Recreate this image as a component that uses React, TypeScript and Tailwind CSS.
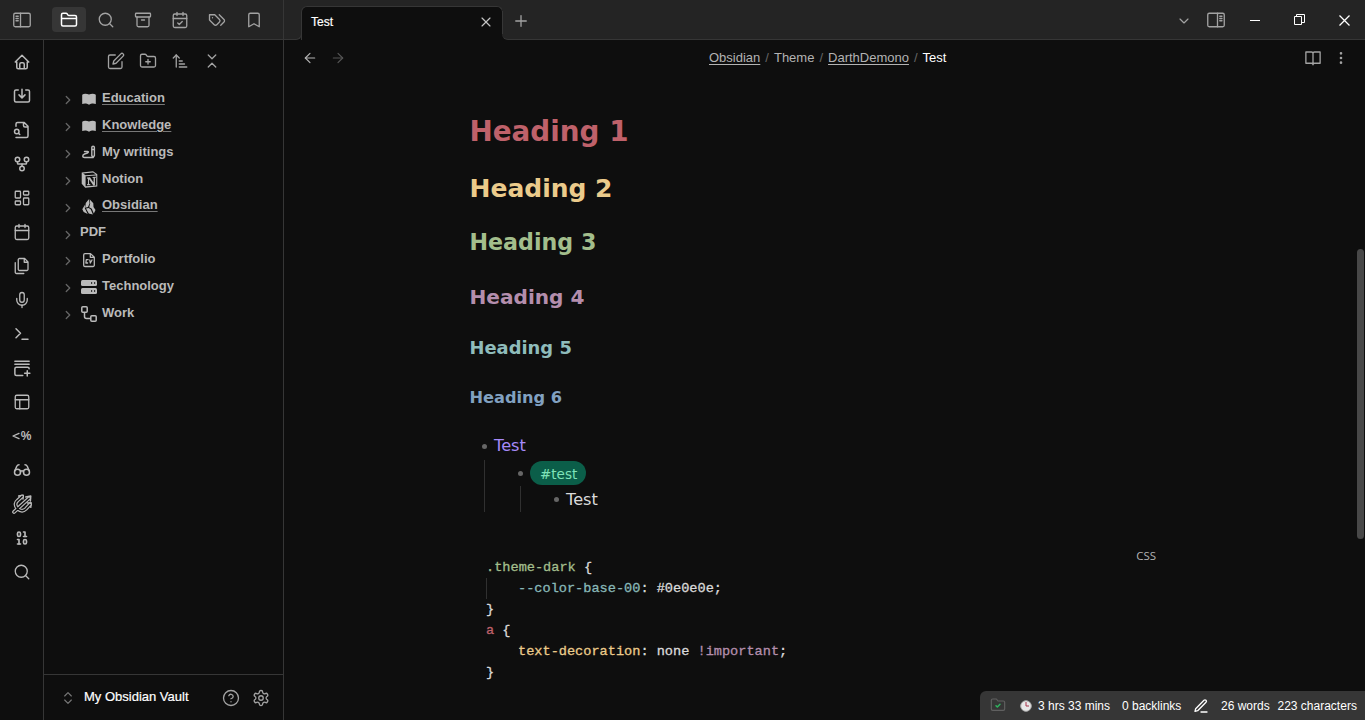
import React from "react";
import {
  Archive, ArrowLeft, ArrowRight, ArrowUpNarrowWide, Binary, Bookmark, Calendar,
  CalendarCheck, ChevronDown, ChevronRight, ChevronsUpDown, CircleQuestionMark,
  EllipsisVertical, FolderPlus, GitFork, Glasses, LayoutDashboard, Mic, PanelsTopLeft, Plus,
  Search, X,
} from "lucide-react";

type SvgProps = { children: React.ReactNode; size?: number; className?: string; sw?: number };

function Svg({ children, size = 18, className = "", sw = 1.75 }: SvgProps) {
  return (
    <svg width={size} height={size} viewBox="0 0 24 24" fill="none" stroke="currentColor" strokeWidth={sw} strokeLinecap="round" strokeLinejoin="round" className={"shrink-0 " + className}>
      {children}
    </svg>
  );
}

const L = { size: 18, strokeWidth: 1.75 };

const FolderLine = () => (
  <Svg sw={2}>
    <path d="M4 20h16a2 2 0 0 0 2-2V8a2 2 0 0 0-2-2h-7.9a2 2 0 0 1-1.7-.9L9.6 3.9A2 2 0 0 0 7.9 3H4a2 2 0 0 0-2 2v13a2 2 0 0 0 2 2ZM2 10h20" />
  </Svg>
);

const SidebarIcon = ({ right = false }: { right?: boolean }) => (
  <Svg className={right ? "-scale-x-100" : ""}>
    <rect x="1" y="3" width="22" height="18" rx="2" />
    <path d="M10 3v18M4 7h3M4 10h3M4 13h3" />
  </Svg>
);

const tridentPath = "M2.500 21.500 20.500 5M6.500 17.500C3 13.500 4 10 6.500 8L12 3M6.500 17.500c4 3.500 7.500 3 10 .5L21.500 12.500";
const tridentTips = "M16.500 3.500 22.500 2.500 22 8.500M8 2.500 13.500 1.500 13.200 6M18.500 10.800 23 10.500 22.500 16";

const ribbon: React.ReactNode[] = [
  <Svg sw={2}><path d="M5 12H3l9-9 9 9h-2M5 12v7a2 2 0 0 0 2 2h10a2 2 0 0 0 2-2v-7M9 21v-6a2 2 0 0 1 2-2h2a2 2 0 0 1 2 2v6" /></Svg>,
  <Svg sw={2}><path d="M7 4H4a2 2 0 0 0-2 2v12a2 2 0 0 0 2 2h16a2 2 0 0 0 2-2V6a2 2 0 0 0-2-2h-3M12 3v11M8 10.500l4 4 4-4" /></Svg>,
  <Svg sw={2}><path d="M4 22h14a2 2 0 0 0 2-2V7l-5-5H6a2 2 0 0 0-2 2v3M14 2v4a2 2 0 0 0 2 2h4M9 18l-1.500-1.500" /><circle cx="5" cy="14" r="3" /></Svg>,
  <GitFork size={18} strokeWidth={2} />,
  <LayoutDashboard {...L} />,
  <Calendar {...L} />,
  <Svg><path d="M15.500 2H8.600c-.4 0-.8.2-1.100.5-.3.3-.5.7-.5 1.100v12.800c0 .4.2.8.5 1.100.3.3.7.5 1.100.5h9.800c.4 0 .8-.2 1.100-.5.3-.3.5-.7.5-1.100V6.500L15.500 2zM3 7.600v12.800c0 .4.2.8.5 1.100.3.3.7.5 1.100.5h9.800M15 2v5h5" /></Svg>,
  <Mic {...L} />,
  <Svg sw={2}><path d="m4 17 6-6-6-6M12 19h8" /></Svg>,
  <Svg sw={2}><path d="M2.500 3h19M2.500 7h19M21.500 13a2 2 0 0 0-2-2h-15a2 2 0 0 0-2 2v7a2 2 0 0 0 2 2H13M19 15.500v7M15.500 19h7" /></Svg>,
  <PanelsTopLeft {...L} />,
  <span className="flex items-center font-['Liberation_Sans'] text-[12px] font-bold leading-none"><Svg size={8} sw={4}><path d="M21 4 3 12l18 8" /></Svg><span className="ml-[1px]">%</span></span>,
  <Glasses size={18} strokeWidth={2} />,
  <Svg size={20}>
    <path d={tridentPath} strokeWidth="4.600" />
    <path d={tridentTips} strokeWidth="1.800" />
    <path d={tridentPath} stroke="#0e0e0e" strokeWidth="1.700" />
  </Svg>,
  <Binary size={18} strokeWidth={2.200} />,
  <Search {...L} />,
];

const BookSolid = () => (
  <svg width="16" height="16" viewBox="0 0 16 16" fill="currentColor"><path d="M1.200 3.700C2.700 2.600 5.500 2.500 8 3.600c2.500-1.100 5.300-1 6.800.1v9.400c-1.700-.8-4.700-.8-6.100.3H7.300c-1.400-1.100-4.400-1.100-6.100-.3Z" /></svg>
);

const tree: { label: string; link?: boolean; icon?: React.ReactNode }[] = [
  { label: "Education", link: true, icon: <BookSolid /> },
  { label: "Knowledge", link: true, icon: <BookSolid /> },
  { label: "My writings", icon: (
    <svg width="16" height="16" viewBox="0 0 16 16" fill="none" stroke="currentColor" strokeWidth="1.400" strokeLinejoin="round" strokeLinecap="round"><path d="M10.800 3V2.500a1.300 1.300 0 0 1 2.600 0V10.500L12.100 12.500l-1.300-2ZM10.800 4.500h2.600M3.500 6.500h3.300c1 0 .7 1.200-.3 1.500L3.500 9C1 10 1.300 12.500 3.500 12.500h8.500" /></svg>) },
  { label: "Notion", icon: (
    <svg width="17" height="17" viewBox="0 0 24 24" fill="currentColor" className="-mt-px -mr-px"><path fillRule="evenodd" d="M1 2 17 .5 23 4.500V22L6 23.500 1 18ZM3 3.500 6.500 6 21 5l-4-2.800ZM6.500 7.500v14l15-1v-14ZM8.500 9l4.200-.3 5 7.500V10l-1.500-.3V8.300l5-.3v1.300l-1.500.5v10.400l-2.300.2-6-8.700v6.700l1.800.4v1.200L8.500 20v-1.300l1.300-.5v-7.400l-1.300-.3Z" /></svg>) },
  { label: "Obsidian", link: true, icon: (
    <svg width="16" height="16" viewBox="0 0 16 16" fill="currentColor"><path d="M4.800 4.100 7.800.2 8.600 4.300 7 8 4.200 8.800ZM8.600.3l3.700 3.900.2 3.700 2 3-1.700 3.500-2-4.700-2.600-1.500L9.200 4.500ZM3.900 5.700v3.900l2.800 5.400-4-1.900L1.300 10.200ZM5 9.500l2.700-.5 2.100 1.500 2.100 4.900-4.100-.8Z" /></svg>) },
  { label: "PDF" },
  { label: "Portfolio", icon: (
    <svg width="16" height="16" viewBox="0 0 16 16" fill="none" stroke="currentColor" strokeWidth="1.300" strokeLinejoin="round"><path d="M9.500 1.600H4a1.300 1.300 0 0 0-1.300 1.300v10.300A1.300 1.300 0 0 0 4 14.500h8a1.300 1.300 0 0 0 1.300-1.300V5.200ZM9.300 1.800v3.500h3.800M7.600 7.700H5.300L4.900 11h2.200M8.700 7.500 9.300 11l2-3.500" /></svg>) },
  { label: "Technology", icon: (
    <svg width="16" height="16" viewBox="0 0 16 16"><rect y="1" width="16" height="6" rx="1.500" fill="currentColor" /><rect y="9" width="16" height="6" rx="1.500" fill="currentColor" /><path d="M10 4h1.200M13 4h1.200M10 12h1.200M13 12h1.200" stroke="#0e0e0e" strokeWidth="1.300" /></svg>) },
  { label: "Work", icon: (
    <svg width="16" height="16" viewBox="0 0 16 16" fill="none" stroke="currentColor" strokeWidth="1.500"><rect x=".8" y=".8" width="5.400" height="5.400" rx="1" /><rect x="9.800" y="9.800" width="5.400" height="5.400" rx="1" /><path d="M3.500 6.500v4a2 2 0 0 0 2 2h4" /></svg>) },
];

function TopBar() {
  return (
    <header className="flex h-10 shrink-0 bg-[#242424] text-[#a3a3a3]">
      <div className="flex w-[284px] items-center border-r border-b border-[#363636] pl-[13px]">
        <SidebarIcon />
        <div className="ml-[21px] flex h-[25px] w-[34px] items-center justify-center rounded bg-[#363636] text-white"><FolderLine /></div>
        <div className="ml-[11px] flex gap-[19px]">
          <Search {...L} /><Archive {...L} /><CalendarCheck {...L} />
          <Svg><path d="M9 5H2v7l6.290 6.290c.94.94 2.480.94 3.420 0l3.580-3.580c.94-.94.94-2.480 0-3.420L9 5ZM6 9.010V9M15 5l6.300 6.300a2.400 2.400 0 0 1 0 3.400L17 19" /></Svg>
          <Bookmark {...L} />
        </div>
      </div>
      <div className="flex w-[18px] flex-col">
        <div className="grow" />
        <div className="flex h-4 bg-[#0e0e0e]"><div className="grow rounded-br-md border-r border-b border-[#363636] bg-[#242424]" /></div>
      </div>
      <div className="mt-1.5 -ml-px flex w-[202px] items-center rounded-t-md border-x border-t border-[#363636] bg-[#0e0e0e] pr-2 pl-[9px] text-white">
        <span className="grow pb-[3px] text-[12px] [-webkit-text-stroke:0.2px_currentColor]">Test</span>
        <X size={16} strokeWidth={1.75} className="mb-[4px] text-[#c4c4c4]" />
      </div>
      <div className="relative -ml-px flex grow">
        <div className="absolute bottom-0 left-0 size-1.5 bg-[#0e0e0e]" />
        <div className="relative flex grow items-center rounded-bl-md border-b border-[#363636] bg-[#242424] pl-[10px]">
          <div className="absolute top-[11px] left-0 h-[23px] w-px bg-[#363636]" />
          <Plus {...L} className="mt-[2px]" />
          <div className="grow" />
          <ChevronDown size={16} strokeWidth={1.75} className="mt-[2px]" />
          <div className="mr-[25px] ml-[15px]"><SidebarIcon right /></div>
          <svg className="mt-[2px] mr-[33px]" width="11" height="11" stroke="white"><path d="M0 5.500h10" /></svg>
          <svg className="mr-[34px]" width="11" height="11" fill="none" stroke="white"><path d="M.5 2.500h7v8h-7zM2.500 2.500v-2h8v8h-3" /></svg>
          <svg className="mt-[1px] mr-[15px]" width="11" height="11" stroke="white" strokeWidth="1.300"><path d="m.5.5 10 10m0-10-10 10" /></svg>
        </div>
      </div>
    </header>
  );
}

function Sidebar() {
  return (
    <aside className="flex w-60 shrink-0 flex-col border-r border-[#363636]">
      <div className="flex h-[43px] items-center gap-[14px] pb-[2px] pl-[63px] text-[#a3a3a3]">
        <Svg><path d="M11 4H4a2 2 0 0 0-2 2v14a2 2 0 0 0 2 2h14a2 2 0 0 0 2-2v-7M18.500 2.500a2.100 2.100 0 0 1 3 3L12 15l-4 1 1-4Z" /></Svg>
        <FolderPlus {...L} /><ArrowUpNarrowWide {...L} />
        <Svg><path d="m7 20 5-5 5 5M7 4l5 5 5-5" /></Svg>
      </div>
      <nav className="flex grow flex-col pt-[1.300px] pl-[17px]">
        {tree.map((t) => (
          <div key={t.label} className="flex h-[26.875px] items-center text-[13px] font-bold text-[#bababa]">
            <ChevronRight size={14} strokeWidth={2.200} className="mt-[5px] mr-[5px] text-[#666]" />
            {t.icon && <span className="mt-[3px] mr-[5px] ml-[1px]">{t.icon}</span>}
            <span className={t.link ? "underline decoration-[#777] underline-offset-2" : ""}>{t.label}</span>
          </div>
        ))}
      </nav>
      <div className="flex h-[46px] items-center border-t border-[#363636] pb-[2px] pl-[16px] text-[#a3a3a3]">
        <ChevronsUpDown size={16} strokeWidth={1.75} className="mt-[3px] text-[#777]" />
        <span className="ml-2 w-[138px] text-[13px] text-white [-webkit-text-stroke:0.2px_currentColor]">My Obsidian Vault</span>
        <CircleQuestionMark {...L} className="mt-[3px] mr-[12px]" />
        <Svg className="mt-[3px]"><path d="M12.220 2h-.44a2 2 0 0 0-2 2v.18a2 2 0 0 1-1 1.730l-.43.25a2 2 0 0 1-2 0l-.15-.08a2 2 0 0 0-2.730.73l-.22.38a2 2 0 0 0 .73 2.730l.15.1a2 2 0 0 1 1 1.720v.51a2 2 0 0 1-1 1.740l-.15.09a2 2 0 0 0-.73 2.730l.22.38a2 2 0 0 0 2.730.73l.15-.08a2 2 0 0 1 2 0l.43.25a2 2 0 0 1 1 1.730V20a2 2 0 0 0 2 2h.44a2 2 0 0 0 2-2v-.18a2 2 0 0 1 1-1.730l.43-.25a2 2 0 0 1 2 0l.15.08a2 2 0 0 0 2.730-.73l.22-.39a2 2 0 0 0-.73-2.730l-.15-.08a2 2 0 0 1-1-1.740v-.5a2 2 0 0 1 1-1.740l.15-.09a2 2 0 0 0 .73-2.730l-.22-.38a2 2 0 0 0-2.730-.73l-.15.08a2 2 0 0 1-2 0l-.43-.25a2 2 0 0 1-1-1.730V4a2 2 0 0 0-2-2z" /><circle cx="12" cy="12" r="3" /></Svg>
      </div>
    </aside>
  );
}

const headings = [
  ["h-[54px] text-[27.8px] text-[#bf616a]", "Heading 1"],
  ["h-[60px] text-[25px] text-[#ebcb8b]", "Heading 2"],
  ["h-[48px] text-[22.2px] text-[#a3be8c]", "Heading 3"],
  ["h-[60px] text-[20.1px] text-[#b48ead]", "Heading 4"],
  ["h-[42px] text-[17.9px] text-[#8fbcbb]", "Heading 5"],
  ["h-[58px] text-[16.2px] text-[#81a1c1]", "Heading 6"],
];

const Dot = () => <i className="mr-[7px] size-[5px] shrink-0 rounded-full bg-[#666]" />;

function Editor() {
  return (
    <main className="flex grow flex-col">
      <div className="flex h-9 shrink-0 items-center pl-[18px] text-[13px] text-[#b3b3b3]">
        <ArrowLeft size={16} strokeWidth={1.75} />
        <ArrowRight size={16} strokeWidth={1.75} className="ml-3 text-[#555]" />
        <div className="ml-[363px] flex grow gap-[5px] whitespace-nowrap">
          <span className="underline underline-offset-2">Obsidian</span><span className="text-[#666]">/</span>
          <span>Theme</span><span className="text-[#666]">/</span>
          <span className="underline underline-offset-2">DarthDemono</span><span className="text-[#666]">/</span>
          <span className="text-white">Test</span>
        </div>
        <Svg className="mr-[11px] text-[#a3a3a3]"><path d="M12 6a2 2 0 0 0-2-2H2.500v15H10a2 2 0 0 1 2 2 2 2 0 0 1 2-2h7.500V4H14a2 2 0 0 0-2 2ZM12 6v15" /></Svg>
        <EllipsisVertical size={16} strokeWidth={2} className="mr-4 text-[#a3a3a3]" />
      </div>
      <div className="flex grow">
        <article className="grow pt-[29px] pl-[185.500px] font-['DejaVu_Sans']">
          {headings.map(([cls, text]) => (
            <h2 key={text} className={"flex items-center font-bold " + cls}>{text}</h2>
          ))}
          <div className="mt-[6px] ml-[12.500px] text-[16.200px] text-[#dadada]">
            <div className="flex h-[27px] items-center text-[#a68af9]"><Dot />Test</div>
            <div className="ml-[2px] border-l border-[#303030] pl-[34px]">
              <div className="-ml-px flex h-[26px] items-center"><Dot />
                <span className="flex h-[24px] items-center rounded-full bg-[#0b5e49] px-[10px] pt-[2px] text-[13.500px] text-[#7fe3b8]"><span className="-mr-[1px]">#test</span></span>
              </div>
              <div className="ml-[1px] border-l border-[#303030] pl-[33px]"><div className="flex h-[26px] items-center"><Dot /><span className="pt-[2px]">Test</span></div></div>
            </div>
          </div>
          <div className="mt-[33px] flex justify-between pr-[201px]">
            <pre className="mt-[12px] ml-[16.500px] font-['Liberation_Mono'] text-[13.600px] leading-[21px] text-[#dadada] [-webkit-text-stroke:0.3px_currentColor]">
              <div><span className="text-[#a3be8c]">.theme-dark</span> {"{"}</div>
              <div className="border-l border-[#303030] pl-[31px]"><span className="text-[#88b8b8]">--color-base-00</span>: #0e0e0e;</div>
              <div>{"}"}</div>
              <div><span className="text-[#bf616a]">a</span> {"{"}</div>
              <div className="pl-8"><span className="text-[#ebcb8b]">text-decoration</span>: none <span className="text-[#b48ead]">!important</span>;</div>
              <div>{"}"}</div>
            </pre>
            <span className="mt-[2px] font-['Open_Sans',sans-serif] text-[11.500px] leading-[18px] text-[#b3b3b3]">CSS</span>
          </div>
        </article>
        <div className="mt-[173px] mr-px h-[290px] w-[7px] rounded-full bg-[#484848]" />
      </div>
    </main>
  );
}

function StatusBar() {
  return (
    <div className="absolute right-0 bottom-0 flex h-[29px] w-[385px] items-center rounded-tl-md bg-[#363636] pl-[10px] text-[12px] whitespace-nowrap text-white">
      <Svg size={16} className="mb-[2px] text-[#606060]"><path d="M4 20h16a2 2 0 0 0 2-2V8a2 2 0 0 0-2-2h-8L9.600 3H4a2 2 0 0 0-2 2v13a2 2 0 0 0 2 2Z" /><path d="m9 13 2 2 4-4" stroke="#2fb45f" strokeWidth="2.200" /></Svg>
      <svg className="mr-[6px] ml-[14px]" width="12" height="12" viewBox="0 0 12 12"><circle cx="6" cy="6" r="5.300" fill="#e7e7e7" stroke="#aaa" /><path d="M6 2v4h3" fill="none" stroke="#a8324a" /></svg>
      <span className="w-[84px]">3 hrs 33 mins</span>
      <span className="w-[71px]">0 backlinks</span>
      <Svg size={16} className="mr-[12px]" sw={2}><path d="M12 21h9M16.500 3.500a2.120 2.120 0 0 1 3 3L7 19l-4 1 1-4Z" /></Svg>
      <span className="w-[56.500px]">26 words</span>
      <span>223 characters</span>
    </div>
  );
}

export default function App() {
  return (
    <div className="relative flex h-[720px] w-[1365px] flex-col overflow-hidden bg-[#0e0e0e] font-['Liberation_Sans',sans-serif]">
      <TopBar />
      <div className="flex min-h-0 grow">
        <div className="flex w-11 shrink-0 flex-col items-center border-r border-[#363636] pt-[5px] text-[#bababa]">
          {ribbon.map((icon, i) => (
            <div key={i} className="flex h-[34px] shrink-0 items-center justify-center">{icon}</div>
          ))}
        </div>
        <Sidebar />
        <Editor />
      </div>
      <StatusBar />
    </div>
  );
}
